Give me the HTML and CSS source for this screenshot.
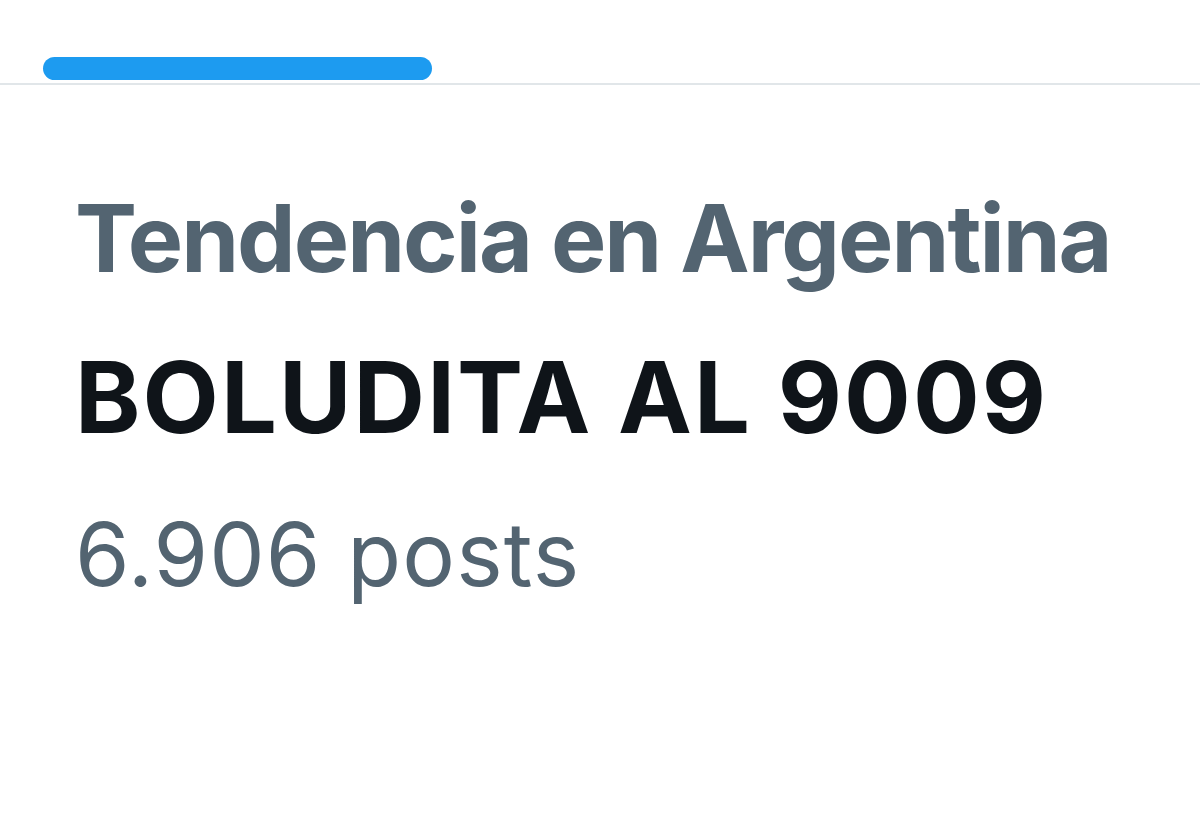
FILE: index.html
```html
<!DOCTYPE html>
<html lang="es">
<head>
    <meta charset="UTF-8">
    <title>Tendencia</title>
    <link rel="stylesheet" href="styles.css">
</head>
<body>
    <div class="tabs">
        <div class="tab-indicator"></div>
    </div>

    <div class="trend">
        <div class="trend-context">Tendencia en Argentina</div>
        <div class="trend-name">BOLUDITA AL 9009</div>
        <div class="trend-count">6.906 posts</div>
    </div>
</body>
</html>
```

FILE: styles.css
```css
body {
    margin: 0;
    background-color: #ffffff;
    font-family: Inter, "Noto Sans", Arial, sans-serif;
}
.tabs {
    height: 85px;
    border-bottom: 2px solid #e1e6e9;
    box-sizing: border-box;
    padding-top: 57px;
    padding-left: 43px;
}
.tab-indicator {
    width: 389px;
    height: 23px;
    border-radius: 12px;
    background-color: #1d9bf0;
}
.trend {
    padding-left: 75px;
    padding-top: 103px;
}
.trend-context {
    font-size: 93px;
    font-weight: 700;
    line-height: 100px;
    letter-spacing: -2px;
    color: #536471;
}
.trend-name {
    margin-top: 54px;
    font-size: 99px;
    font-weight: 700;
    line-height: 110px;
    letter-spacing: 2.1px;
    color: #0f1419;
}
.trend-count {
    margin-top: 52px;
    font-size: 88px;
    font-weight: 400;
    line-height: 100px;
    letter-spacing: 1.1px;
    color: #536471;
}
```
